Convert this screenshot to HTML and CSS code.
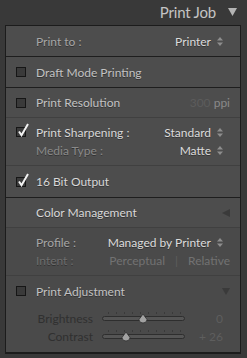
FILE: index.html
```html
<!DOCTYPE html>
<html>
<head>
<meta charset="utf-8">
<link rel="stylesheet" href="styles.css">
</head>
<body>
<div class="page">
  <div class="header">
    <span class="title">Print Job</span>
    <svg class="hdr-tri" width="9" height="8" viewBox="0 0 9 8"><path d="M0 0H9L4.5 8Z" fill="#b4b4b4"/></svg>
  </div>
  <div class="panel">
    <div class="sec h30 b-dark">
      <div class="line">
        <span class="lbl mid">Print to :</span>
        <span class="val">Printer<svg class="ud" width="6" height="9" viewBox="0 0 6 9"><path d="M0 3.5L3 0L6 3.5Z M0 5.5L3 9L6 5.5Z" fill="#8e8e8e"/></svg></span>
      </div>
    </div>
    <div class="sec h30 b-dark">
      <div class="line">
        <span class="cb"></span>
        <span class="lbl">Draft Mode Printing</span>
      </div>
    </div>
    <div class="sec h29 b-faint">
      <div class="line">
        <span class="cb"></span>
        <span class="lbl">Print Resolution</span>
        <span class="res"><span class="n">300</span> ppi</span>
      </div>
    </div>
    <div class="sec h47 b-faint pad2">
      <div class="line">
        <span class="cb"><svg class="ck" width="15" height="15" viewBox="0 0 15 15"><path d="M3 9.5L5.5 13.2L12 2" stroke="#f2f2f2" stroke-width="2" fill="none"/></svg></span>
        <span class="lbl bright">Print Sharpening :</span>
        <span class="val">Standard<svg class="ud" width="6" height="9" viewBox="0 0 6 9"><path d="M0 3.5L3 0L6 3.5Z M0 5.5L3 9L6 5.5Z" fill="#8e8e8e"/></svg></span>
      </div>
      <div class="line">
        <span class="lbl dim">Media Type :</span>
        <span class="val">Matte<svg class="ud" width="6" height="9" viewBox="0 0 6 9"><path d="M0 3.5L3 0L6 3.5Z M0 5.5L3 9L6 5.5Z" fill="#8e8e8e"/></svg></span>
      </div>
    </div>
    <div class="sec h31 b-dark">
      <div class="line">
        <span class="cb"><svg class="ck" width="15" height="15" viewBox="0 0 15 15"><path d="M3 9.5L5.5 13.2L12 2" stroke="#f2f2f2" stroke-width="2" fill="none"/></svg></span>
        <span class="lbl bright">16 Bit Output</span>
      </div>
    </div>
    <div class="sec h29 b-faint">
      <div class="line">
        <span class="lbl bright">Color Management</span>
        <svg class="sec-tri" width="8" height="8" viewBox="0 0 8 8"><path d="M8 0V8L0 4Z" fill="#3a3a3a"/></svg>
      </div>
    </div>
    <div class="sec h47 b-faint pad2 dark-bg">
      <div class="line">
        <span class="lbl mid">Profile :</span>
        <span class="val">Managed by Printer<svg class="ud" width="6" height="9" viewBox="0 0 6 9"><path d="M0 3.5L3 0L6 3.5Z M0 5.5L3 9L6 5.5Z" fill="#8e8e8e"/></svg></span>
      </div>
      <div class="line">
        <span class="lbl faint">Intent :</span>
        <span class="intent"><span>Perceptual</span><span class="bar">|</span><span>Relative</span></span>
      </div>
    </div>
    <div class="sec adj dark-bg">
      <div class="line">
        <span class="cb"></span>
        <span class="lbl">Print Adjustment</span>
        <svg class="sec-tri" width="8" height="7" viewBox="0 0 8 7"><path d="M0 0H8L4 7Z" fill="#3a3a3a"/></svg>
      </div>
      <div class="slider-row first">
        <span class="s-lbl">Brightness</span>
        <svg class="slider" width="84" height="14" viewBox="0 0 84 14">
          <g stroke="#3a3a3a" stroke-width="1">
            <path d="M6.5 2V4M14.5 2V4M22.5 2V4M30.5 2V4M38.5 2V4M46.5 2V4M54.5 2V4M62.5 2V4M70.5 2V4M78.5 2V4"/>
          </g>
          <rect x="0.5" y="6.5" width="82" height="4" rx="2" fill="#555" stroke="#2e2e2e"/>
          <path d="M41 4L45 9.5A4 3.5 0 0 1 37 9.5Z" fill="#a2a2a2" stroke="#2e2e2e" stroke-width="0.8"/>
        </svg>
        <span class="s-val">0</span>
      </div>
      <div class="slider-row">
        <span class="s-lbl">Contrast</span>
        <svg class="slider" width="84" height="14" viewBox="0 0 84 14">
          <g stroke="#3a3a3a" stroke-width="1">
            <path d="M6.5 2V4M14.5 2V4M22.5 2V4M30.5 2V4M38.5 2V4M46.5 2V4M54.5 2V4M62.5 2V4M70.5 2V4M78.5 2V4"/>
          </g>
          <rect x="0.5" y="6.5" width="82" height="4" rx="2" fill="#555" stroke="#2e2e2e"/>
          <path d="M24 4L28 9.5A4 3.5 0 0 1 20 9.5Z" fill="#a2a2a2" stroke="#2e2e2e" stroke-width="0.8"/>
        </svg>
        <span class="s-val">+ 26</span>
      </div>
    </div>
  </div>
</div>
</body>
</html>
```

FILE: styles.css
```css
* { box-sizing: border-box; }
html, body { margin: 0; padding: 0; }
body {
  background: #393939;
  font-family: "Lato", "Open Sans", sans-serif;
  font-size: 12px;
  width: 247px;
  height: 358px;
  overflow: hidden;
}
.page { padding: 0 6px 0 5px; }
.header {
  height: 25px;
  display: flex;
  align-items: center;
  justify-content: flex-end;
  padding-right: 4px;
  gap: 11px;
}
.title {
  color: #c4c4c4;
  font-size: 15px;
  letter-spacing: -0.2px;
  margin-top: -2px;
  margin-right: 1px;
}
.hdr-tri { margin-top: -2px; }
.panel {
  border: 1px solid #1c1c1c;
  border-bottom-width: 2px;
  background: #4d4d4d;
}
.sec { display: flex; flex-direction: column; justify-content: center; }
.h29 { height: 30px; }
.h30 { height: 31px; }
.h31 { height: 32px; }
.h47 { height: 48px; }
.b-dark { border-bottom: 1px solid #1e1e1e; }
.b-faint { border-bottom: 1px solid #404040; }
.pad2 { justify-content: flex-start; padding-top: 5px; }
.dark-bg { background: #4a4a4a; }
.line {
  display: flex;
  align-items: center;
  padding: 0 10px 0 30px;
  height: 18px;
  position: relative;
  white-space: nowrap;
}
.cb {
  position: absolute;
  left: 10px;
  top: 4px;
  width: 10px;
  height: 10px;
  border: 1px solid #161616;
  background: #3a3a3a;
}
.ck { position: absolute; left: -1px; top: -6px; }
.lbl {
  color: #c2c2c2;
  text-shadow: 0 1px 0 rgba(0,0,0,0.35);
}
.lbl.bright { color: #d8d8d8; }
.lbl.mid { color: #a6a6a6; }
.lbl.dim { color: #8a8a8a; }
.lbl.faint { color: #6e6e6e; }
.val {
  margin-left: auto;
  color: #dcdcdc;
  display: flex;
  align-items: center;
  gap: 6px;
  padding-right: 7px;
  text-shadow: 0 1px 0 rgba(0,0,0,0.35);
}
.ud { margin-top: 1px; }
.res { margin-left: auto; color: #8a8a8a; }
.res .n { color: #5c5c5c; }
.sec-tri { margin-left: auto; margin-right: 0; }
.intent {
  margin-left: auto;
  display: flex;
  color: #727272;
  gap: 10px;
  padding-right: 0;
}
.intent .bar { color: #5e5e5e; }
.adj {
  justify-content: flex-start;
  padding-top: 6px;
  height: 76px;
}
.slider-row {
  display: flex;
  align-items: center;
  height: 18px;
}
.slider-row.first { margin-top: 9px; }
.s-lbl {
  width: 87px;
  text-align: right;
  color: #303030;
  font-size: 12px;
}
.slider { margin-left: 9px; margin-top: -2px; }
.s-val {
  width: 37px;
  text-align: right;
  color: #5e5e5e;
}
```
